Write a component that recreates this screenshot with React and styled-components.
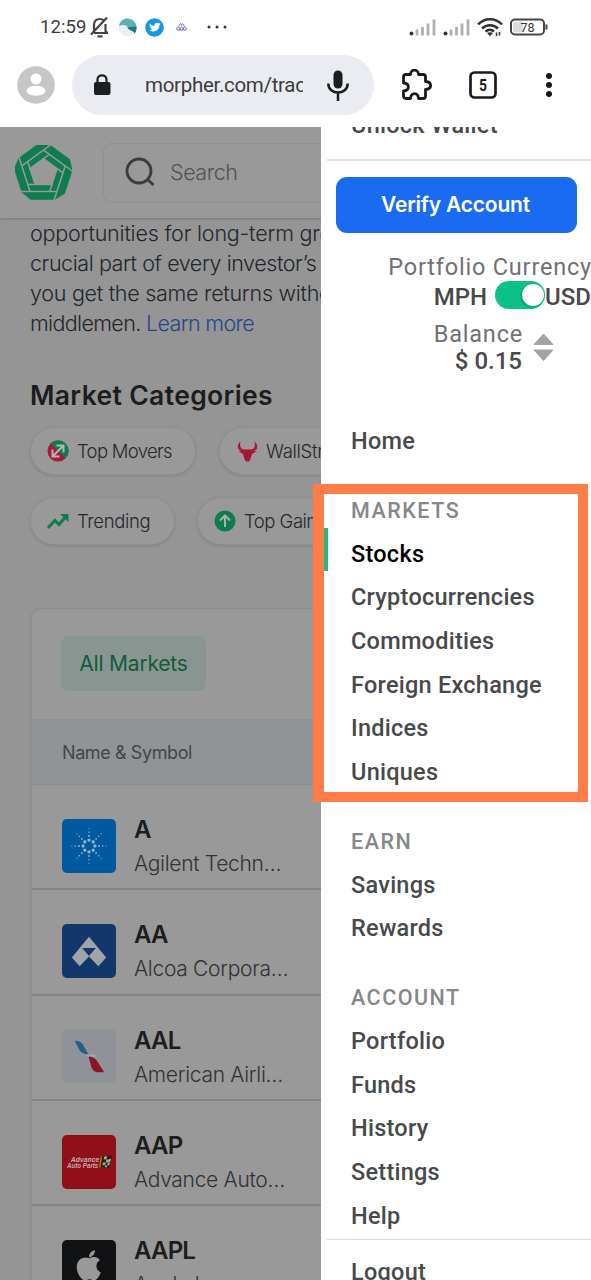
import React from 'react';
import styled, { css, createGlobalStyle } from 'styled-components';

const GlobalStyle = createGlobalStyle`
  * {
    box-sizing: border-box;
  }
  body {
    margin: 0;
    background: #fff;
  }
`;

const Screen = styled.div`
  width: 591px;
  height: 1280px;
  display: flex;
  flex-direction: column;
  overflow: hidden;
  background: #fff;
  font-family: Roboto, 'Liberation Sans', sans-serif;
`;

/* ---------- phone status bar ---------- */

const StatusBar = styled.div`
  height: 54px;
  flex: none;
  display: flex;
  align-items: center;
  padding: 0 43px 0 40px;
  color: #3c3c3e;
`;

const Clock = styled.span`
  width: 50px;
  font-size: 18.5px;
  letter-spacing: 0.1px;
  white-space: nowrap;
`;

const StatusIcons = styled.div`
  display: flex;
  align-items: center;
  gap: ${props => props.$gap}px;
  ${props => props.$left && css`
    margin-left: ${props.$left}px;
  `}
  ${props => props.$end && css`
    margin-left: auto;
  `}
`;

/* ---------- browser toolbar ---------- */

const Toolbar = styled.div`
  height: 73px;
  flex: none;
  display: flex;
  align-items: flex-start;
  padding-left: 17px;
`;

const ToolIcon = styled.div`
  height: 61px;
  display: flex;
  align-items: center;
  margin-left: ${props => props.$left || 0}px;
`;

const AddressBar = styled.div`
  width: 302px;
  height: 60px;
  margin-left: 17px;
  margin-top: 1px;
  padding: 0 24px 0 20px;
  border-radius: 30px;
  background: #ebecf1;
  display: flex;
  align-items: center;
`;

const Url = styled.div`
  width: 158px;
  margin-left: 33px;
  margin-right: 24px;
  overflow: hidden;
  white-space: nowrap;
  font-size: 20.5px;
  letter-spacing: -0.3px;
  line-height: 28px;
  color: #3b3c40;
`;

/* ---------- dimmed page ---------- */

const Viewport = styled.div`
  position: relative;
  flex: 1;
  min-height: 0;
  overflow: hidden;
  background: #959595;
  font-family: Inter, 'Liberation Sans', sans-serif;
`;

const Header = styled.div`
  height: 91px;
  display: flex;
  align-items: center;
  padding-left: 15px;
  background: #999;
  box-shadow: 0 1px 3px rgba(0, 0, 0, 0.2);
`;

const SearchBox = styled.div`
  width: 400px;
  height: 60px;
  margin-left: 31px;
  padding: 0 0 2px 21px;
  display: flex;
  align-items: center;
  gap: 14px;
  border: 1px solid #8f8f8f;
  border-radius: 9px;
  color: #505255;
  font-size: 21.5px;
  font-weight: 300;
  letter-spacing: -0.45px;
`;

const Intro = styled.div`
  padding-left: 30px;
  font-size: 21.5px;
  font-weight: 300;
  line-height: 30px;
  color: #22272c;
`;

const IntroLine = styled.div`
  white-space: nowrap;
  letter-spacing: ${props => props.$track || 0}px;
`;

const LearnMore = styled.a`
  color: #23478d;
`;

const Title = styled.h2`
  margin: 42px 0 0 30px;
  font-size: 26.5px;
  font-weight: 600;
  line-height: 31px;
  letter-spacing: 0.35px;
  color: #1b1d1f;
  white-space: nowrap;
`;

const ChipRow = styled.div`
  display: flex;
  gap: ${props => props.$gap}px;
  margin: ${props => props.$top}px 0 0 30px;
`;

const Chip = styled.div`
  flex: none;
  width: ${props => props.$width}px;
  height: 48px;
  padding-left: 16px;
  display: flex;
  align-items: center;
  gap: 8px;
  border: 1px solid #909090;
  border-radius: 24px;
  background: #999;
  box-shadow: 0 1px 3px rgba(0, 0, 0, 0.12);
  font-size: 18.5px;
  font-weight: 300;
  letter-spacing: ${props => props.$track || 0}px;
  color: #25282d;
  white-space: nowrap;
`;

const MarketCard = styled.div`
  width: 620px;
  margin: 63px 0 0 30px;
  border: 1px solid #8d8d8d;
  border-left: 2px solid #8e8e8e;
  border-radius: 10px 10px 0 0;
  background: #999;
`;

const Tabs = styled.div`
  height: 110px;
  padding: 0 0 2px 29px;
  display: flex;
  align-items: center;
`;

const Tab = styled.div`
  width: 145px;
  height: 55px;
  border-radius: 8px;
  background: #899591;
  display: flex;
  align-items: center;
  justify-content: center;
  color: #0f5d3a;
  font-size: 21px;
  letter-spacing: -0.2px;
`;

const TableHead = styled.div`
  height: 66px;
  padding: 1px 0 0 30px;
  display: flex;
  align-items: center;
  background: #919496;
  border-top: 1px solid #8d8f91;
  border-bottom: 1px solid #8a8c8d;
  color: #434649;
  font-size: 18px;
  letter-spacing: -0.4px;
`;

const StockRow = styled.div`
  height: 105.3px;
  padding: 20px 0 0 30px;
  display: flex;
  align-items: center;
  gap: 18px;
  border-bottom: 2px solid #858585;
  > svg {
    margin-bottom: 2px;
  }
`;

const StockText = styled.div`
  display: flex;
  flex-direction: column;
  white-space: nowrap;
`;

const Ticker = styled.div`
  font-size: 24px;
  font-weight: 600;
  line-height: 34px;
  letter-spacing: -0.8px;
  color: #1b1d1f;
`;

const Company = styled.div`
  font-size: 21px;
  font-weight: 300;
  line-height: 33px;
  letter-spacing: -0.3px;
  color: #303235;
`;

/* ---------- side menu ---------- */

const Drawer = styled.div`
  position: absolute;
  top: 0;
  right: 0;
  bottom: 0;
  width: 270px;
  overflow: hidden;
  background: #fff;
  font-family: Roboto, 'Liberation Sans', sans-serif;
  color: #48494b;
`;

const Wallet = styled.div`
  height: 61px;
  margin: -27px 0 0 6px;
  padding-left: 24px;
  border-bottom: 2px solid #e3e3e5;
  font-size: 23.5px;
  font-weight: 500;
  line-height: 50px;
  letter-spacing: 0.25px;
`;

const VerifyButton = styled.button`
  display: block;
  width: 241px;
  height: 56px;
  margin: 16px 0 0 15px;
  padding: 0 2px 1px 0;
  border: 0;
  border-radius: 11px;
  background: #1b6bf0;
  color: #fff;
  font-family: Inter, sans-serif;
  font-size: 21px;
  font-weight: 600;
  letter-spacing: -0.2px;
`;

const Label = styled.div`
  font-size: 23.5px;
  line-height: 28px;
  letter-spacing: 0.8px;
  margin-right: -1px;
  color: #707173;
  white-space: nowrap;
`;

const Value = styled.span`
  font-size: 24px;
  font-weight: 500;
  line-height: 28px;
  white-space: nowrap;
`;

const Currency = styled.div`
  margin-top: 20px;
  display: flex;
  flex-direction: column;
  align-items: flex-end;
`;

const SwitchRow = styled.div`
  height: 32px;
  display: flex;
  align-items: center;
`;

const Switch = styled.div`
  width: 50px;
  height: 28px;
  margin: -4px 0 0 8px;
  padding: 3px 1px;
  display: flex;
  justify-content: flex-end;
  border-radius: 14px;
  background: #0bc188;
`;

const Knob = styled.div`
  width: 22px;
  height: 22px;
  border-radius: 50%;
  background: #fff;
  box-shadow: -1px 1px 2px rgba(0, 0, 0, 0.25);
`;

const Balance = styled.div`
  margin-top: 7px;
  padding-right: 37px;
  height: 54px;
  display: flex;
  align-items: center;
  justify-content: flex-end;
  gap: 11px;
`;

const BalanceText = styled.div`
  display: flex;
  flex-direction: column;
  align-items: flex-end;
  ${Label} {
    line-height: 26px;
    padding-top: 1px;
  }
`;

const Menu = styled.nav`
  margin-top: 45px;
`;

const MenuItem = styled.a`
  display: flex;
  align-items: center;
  height: 43.7px;
  padding-left: 30px;
  font-size: 23.5px;
  font-weight: 500;
  letter-spacing: 0.25px;
  white-space: nowrap;
  ${props => props.$active && css`
    margin: -4px 0 4px;
    padding: 8px 0 0 23px;
    color: #000;
    border-left: 7px solid #22ba7c;
  `}
`;

const Section = styled.div`
  margin-top: 27px;
`;

const SectionTitle = styled.div`
  height: 42px;
  padding-left: 30px;
  font-size: 21.5px;
  font-weight: 500;
  line-height: 42px;
  letter-spacing: 1.5px;
  color: #868788;
`;

const Logout = styled.div`
  margin-left: 6px;
  margin-top: 1px;
  padding: 8px 0 0 24px;
  border-top: 1px solid #d9d9da;
  font-size: 23.5px;
  font-weight: 500;
  line-height: 48px;
  letter-spacing: 0.25px;
`;

const Highlight = styled.div`
  position: absolute;
  left: 313px;
  top: 357px;
  width: 275px;
  height: 318px;
  border: 10px solid #ff7c49;
  border-left-width: 11px;
`;

/* ---------- icons ---------- */

const BellOff = () => (
  <svg width="20" height="22" viewBox="0 0 20 22" fill="none" stroke="#444" strokeWidth="2.200">
    <path d="M4 15V9c0-4 2.500-6 6-6 1.500 0 3 .5 4 1.500M15.500 8v7l2 2.200M4 17h14M1 18.500 17 1.500M7.500 20.300h5" />
  </svg>
);

const Bird = () => (
  <svg width="19" height="19" viewBox="0 0 19 19">
    <circle cx="9.500" cy="9.500" r="9" fill="#e5f3f3" />
    <path d="M1 8C2 2.500 6 .5 9.500.5c5 0 9 4 9 9 0 3-1 4.500-2 6-1-3-3.500-4-6-5.500C8 6 4 7 1 8z" fill="#5faeb2" />
    <path d="m9 9.500 9.500-1c0 3 0 5-2 7-1-3-4-2-7.500-6z" fill="#23748d" />
  </svg>
);

const Twitter = () => (
  <svg width="19" height="19" viewBox="0 0 19 19">
    <circle cx="9.500" cy="9.500" r="9.300" fill="#1598dc" />
    <path d="M4.500 5.500c1.300 1.500 3 2.300 5 2.400-.3-2.900 2.800-3.900 4.400-2.300l1.500-.5-.9 1.400 1-.2-1.200 1.300c0 4.800-5.300 7.500-9.800 4.900 1.300 0 2.100-.3 2.900-.9-1-.2-1.600-.8-1.800-1.500h.8c-1.200-.4-1.700-1.200-1.700-2.300l.8.2c-1-.8-1.300-1.700-1-2.500z" fill="#fff" />
  </svg>
);

const Mask = () => (
  <svg width="11" height="8" viewBox="0 0 11 8" fill="none" stroke="#7467b4" strokeWidth="1">
    <path d="M3 3.500C3 0 5.500 0 5.500 2.500 5.500 0 8 0 8 3.500M1 7c-1-4 3-4 2.500 0zM4.300 7c-1-4 3.400-4 2.400 0zM7.500 7c-1-4 3.500-4 2.500 0z" />
  </svg>
);

const Dots = () => (
  <svg width="20" height="4" viewBox="0 0 20 4" fill="#333">
    <circle cx="2" cy="2" r="1.500" />
    <circle cx="10" cy="2" r="1.500" />
    <circle cx="18" cy="2" r="1.500" />
  </svg>
);

const Signal = () => (
  <svg width="27" height="17" viewBox="0 0 27 17">
    <circle cx="2.500" cy="14.500" r="2" fill="#333" />
    <path d="M8 16.500v-6M13.500 16.500V8M19 16.500V4.500M25 16.500v-16" stroke="#b0b0b2" strokeWidth="2.800" />
  </svg>
);

const Wifi = () => (
  <svg width="26" height="20" viewBox="0 0 26 20" fill="none" stroke="#333" strokeWidth="2.500">
    <path d="M1 7.500C7.500.5 18.500.5 25 7.500M5 11.500c4.500-4.500 11.500-4.500 16 0M8.500 14.500c2.500-2.200 6-2.200 8.500 0" />
    <path d="m10 16 3 3.200 3-3.200c-1.500-1-4.500-1-6 0z" fill="#333" stroke="none" />
    <path d="M19.500 19v-3.500M22.500 15v3.500" strokeWidth="1.600" />
  </svg>
);

const Battery = () => (
  <svg width="38" height="18" viewBox="0 0 38 18">
    <rect x="1" y="1.500" width="33" height="15" rx="4" fill="#fff" stroke="#444" strokeWidth="2" />
    <rect x="3" y="3.500" width="10" height="11" rx="2" fill="#ddd" />
    <path d="M36.500 6.500v5" stroke="#444" strokeWidth="2" />
    <text x="17.500" y="13.500" textAnchor="middle" fontSize="12.500" fill="#333" fontFamily="Roboto">78</text>
  </svg>
);

const Avatar = () => (
  <svg width="38" height="38" viewBox="0 0 38 38">
    <circle cx="19" cy="19" r="18.800" fill="#c6c6c7" />
    <circle cx="19" cy="13" r="5.500" fill="#fff" />
    <ellipse cx="19" cy="24.800" rx="9.500" ry="5" fill="#fff" />
  </svg>
);

const Lock = () => (
  <svg width="20" height="22" viewBox="0 0 20 22">
    <path d="M5.500 9V5.500c0-5.500 9-5.500 9 0V9" fill="none" stroke="#1d1e20" strokeWidth="2.200" />
    <rect x="2" y="8" width="16.500" height="13" rx="2" fill="#1d1e20" />
  </svg>
);

const Mic = () => (
  <svg width="22" height="31" viewBox="0 0 22 31">
    <rect x="6.500" y="0.500" width="9" height="18" rx="4.500" fill="#1d1e20" />
    <path d="M1.300 13.500c0 12 19.400 12 19.400 0M11 22.500V31" fill="none" stroke="#1d1e20" strokeWidth="2.500" />
  </svg>
);

const Puzzle = () => (
  <svg width="32" height="32" viewBox="0 0 32 32" fill="none" stroke="#1a1a1c" strokeWidth="2.800" strokeLinejoin="round">
    <path d="M2.500 8q0-2.500 2.500-2.500h4.500C9.500-.3 17.500-.3 17.500 5.500H22q2.500 0 2.500 2.500v4.500c6.800.5 6.800 7.500 0 8V27q0 2.500-2.500 2.500h-4.500c-.5-6.500-7.500-6.500-8 0H5Q2.500 29.500 2.500 27v-5c6.500-.5 6.500-7.500 0-8z" />
  </svg>
);

const TabCount = () => (
  <svg width="28" height="28" viewBox="0 0 28 28">
    <rect x="1.500" y="1.500" width="25" height="25" rx="4" fill="none" stroke="#1a1a1c" strokeWidth="2.700" />
    <text x="10" y="20" textLength="8" lengthAdjust="spacingAndGlyphs" fontSize="17" fontWeight="700" fill="#1a1a1c" fontFamily="Roboto">5</text>
  </svg>
);

const Kebab = () => (
  <svg width="8" height="26" viewBox="0 0 8 26" fill="#1a1a1c">
    <circle cx="4" cy="4" r="3" />
    <circle cx="4" cy="13" r="3" />
    <circle cx="4" cy="22" r="3" />
  </svg>
);

const turns = [0, 72, 144, 216, 288];

const Logo = () => (
  <svg width="57" height="56" viewBox="-28.500 -28 57 56">
    {turns.map(a => (
      <polygon key={a} transform={`rotate(${a})`} points="0,0 11.500,26.500 -13,26.500 -21.800,19" fill="#0d7d51" stroke="#0d7d51" strokeWidth=".5" />
    ))}
    <polygon points="0,-15.200 14.500,-4.700 8.900,12.300 -8.900,12.300 -14.500,-4.700" fill="#999" />
    {turns.map(a => (
      <path key={a} transform={`rotate(${a})`} d="M13 18.500H-23M-8 11.600h-7.500" stroke="#999" strokeWidth="1.500" />
    ))}
  </svg>
);

const SearchIcon = () => (
  <svg width="31" height="30" viewBox="0 0 31 30" fill="none" stroke="#3b3c3e" strokeWidth="2.800">
    <circle cx="14" cy="14" r="12" />
    <path d="m22 22 6.500 6" />
  </svg>
);

const Movers = () => (
  <svg width="22" height="22" viewBox="0 0 22 22">
    <circle cx="11" cy="11" r="10.500" fill="#a8183a" />
    <path d="M3.500 3.500a10.500 10.500 0 0 1 15 15z" fill="#0d7d51" />
    <path d="M6 16 16 6M9.500 5.500h7v7M5.500 9.500v7h7" fill="none" stroke="#b5b5b5" strokeWidth="2" />
  </svg>
);

const Bull = () => (
  <svg width="22" height="21" viewBox="-1.500 0 22 21">
    <path d="M3 .5C-.8 4-.8 8.500 4 10l-3 .3L5.500 13 7 18l1.500 2.500h3L13 18l1.500-5 4.500-2.700-3-.3c4.800-1.500 4.800-6 1-9.500 1.300 5-.2 8-4 8H7C3.200 8.500 1.700 5.500 3 .5z" fill="#a8162c" />
  </svg>
);

const Trend = () => (
  <svg width="22" height="17" viewBox="0 0 22 17" fill="none" stroke="#0d7d51" strokeWidth="3">
    <path d="m1 15 7-7.500 4 4 7-8" />
    <path d="M13 1h8.500v8z" fill="#0d7d51" stroke="none" />
  </svg>
);

const Gainer = () => (
  <svg width="22" height="22" viewBox="0 0 22 22">
    <circle cx="11" cy="11" r="10.500" fill="#0d7d51" />
    <path d="M11 17V6M6 10.500l5-5 5 5" fill="none" stroke="#a9b3ae" strokeWidth="2" />
  </svg>
);

const Agilent = () => (
  <svg width="54" height="54" viewBox="-27.500 -27.500 55 55">
    <rect x="-27.500" y="-27.500" width="55" height="55" rx="5" fill="#005a9f" />
    {[0, 45, 90, 135, 180, 225, 270, 315].map(a => (
      <g key={a} transform={`rotate(${a})`} fill="#8fb0c8">
        <circle cx="6" cy="0" r="1.700" />
        <circle cx="10.200" cy="0" r="1" />
        <circle cx="14" cy="0" r="0.800" />
        <circle cx="17.500" cy="0" r="0.600" />
      </g>
    ))}
  </svg>
);

const Alcoa = () => (
  <svg width="54" height="54" viewBox="0 0 55 55">
    <rect width="55" height="55" rx="5" fill="#13376a" />
    <path d="M27.500 13 45 34l-8 9-9.500-10-9.500 10-8-9z" fill="#a0a4aa" />
    <path d="M20.500 24.500h14l-7 8z" fill="#13376a" />
  </svg>
);

const American = () => (
  <svg width="54" height="54" viewBox="0 0 55 55">
    <rect width="55" height="55" rx="5" fill="#8f9298" />
    <path d="M13 12q7 0 9 5l5 9q-8-1-10-6z" fill="#245f89" />
    <path d="M24 26h9l2 2-8 1z" fill="#a5a7aa" />
    <path d="M27 28q6 0 9 5l7 11h-7q-4 0-6-5z" fill="#8c1523" />
  </svg>
);

const Advance = () => (
  <svg width="54" height="54" viewBox="0 0 55 55">
    <rect width="55" height="55" rx="5" fill="#910f18" />
    <g fill="#c4adaf" fontFamily="Liberation Sans" fontWeight="700" fontStyle="italic">
      <text x="9" y="27.500" textLength="29" lengthAdjust="spacingAndGlyphs" fontSize="8">Advance</text>
      <text x="5" y="34" textLength="32" lengthAdjust="spacingAndGlyphs" fontSize="7">Auto Parts</text>
    </g>
    <path d="m41 22 10-1-3 13-9-2z" fill="#26211d" />
    <path d="m40 22-1.500 11" stroke="#a8752a" strokeWidth="1.500" />
    <path d="m43 22 3-.3-.6 3-3 .3zM48 24.500l2-.2-.7 3-2 .2zM45.200 25l2.800-.3-.7 3-2.800.3zM41.700 28l3-.2-.7 3-2.800.1zM46.700 28l2.200-.2-.7 3-2.200.1zM44 31l2.200-.1-.5 2.200-2.200-.4z" fill="#aaa58c" />
  </svg>
);

const Apple = () => (
  <svg width="54" height="54" viewBox="0 0 55 55">
    <rect width="55" height="55" rx="5" fill="#111214" />
    <path d="M28 18.500c3-1.500 8-2 10.500 2-5 3-4.500 10 1 12.500-2 5-5 9-8 8-3-1.200-4-1.200-7 0-4 1.500-9.500-7-9.500-13 0-8 6-12 13-9.500zM27.500 17.500c0-4 3-6.500 6-7 .3 4-3 7-6 7z" fill="#999" />
  </svg>
);

const Sorter = () => (
  <svg width="21" height="29" viewBox="0 0 21 29" fill="#a3a3a4" stroke="#a3a3a4" strokeLinejoin="round">
    <path d="M10.500 1 20 11.500H1zM1 17h19l-9.500 10.500z" />
  </svg>
);

const stocks = [
  { ticker: 'A', name: 'Agilent Techn…', Icon: Agilent },
  { ticker: 'AA', name: 'Alcoa Corpora…', Icon: Alcoa },
  { ticker: 'AAL', name: 'American Airli…', Icon: American },
  { ticker: 'AAP', name: 'Advance Auto…', Icon: Advance },
  { ticker: 'AAPL', name: 'Apple Inc.', Icon: Apple },
];

const sections = [
  { title: 'MARKETS', items: ['Stocks', 'Cryptocurrencies', 'Commodities', 'Foreign Exchange', 'Indices', 'Uniques'] },
  { title: 'EARN', items: ['Savings', 'Rewards'] },
  { title: 'ACCOUNT', items: ['Portfolio', 'Funds', 'History', 'Settings', 'Help'] },
];

const SideMenu = () => (
  <Drawer>
    <Wallet>Unlock Wallet</Wallet>
    <VerifyButton>Verify Account</VerifyButton>
    <Currency>
      <Label>Portfolio Currency</Label>
      <SwitchRow>
        <Value>MPH</Value>
        <Switch><Knob /></Switch>
        <Value>USD</Value>
      </SwitchRow>
    </Currency>
    <Balance>
      <BalanceText>
        <Label>Balance</Label>
        <Value>$ 0.15</Value>
      </BalanceText>
      <Sorter />
    </Balance>
    <Menu>
      <MenuItem>Home</MenuItem>
      {sections.map(section => (
        <Section key={section.title}>
          <SectionTitle>{section.title}</SectionTitle>
          {section.items.map(item => (
            <MenuItem key={item} $active={item === 'Stocks'}>{item}</MenuItem>
          ))}
        </Section>
      ))}
    </Menu>
    <Logout>Logout</Logout>
  </Drawer>
);

const App = () => (
  <Screen>
    <GlobalStyle />
    <StatusBar>
      <Clock>12:59</Clock>
      <StatusIcons $gap={8}>
        <BellOff />
        <Bird />
        <Twitter />
      </StatusIcons>
      <StatusIcons $gap={20} $left={12}>
        <Mask />
        <Dots />
      </StatusIcons>
      <StatusIcons $gap={7} $end>
        <Signal />
        <Signal />
        <Wifi />
        <Battery />
      </StatusIcons>
    </StatusBar>
    <Toolbar>
      <ToolIcon><Avatar /></ToolIcon>
      <AddressBar>
        <Lock />
        <Url>morpher.com/trade</Url>
        <Mic />
      </AddressBar>
      <ToolIcon $left={27}><Puzzle /></ToolIcon>
      <ToolIcon $left={36}><TabCount /></ToolIcon>
      <ToolIcon $left={48}><Kebab /></ToolIcon>
    </Toolbar>
    <Viewport>
      <Header>
        <Logo />
        <SearchBox>
          <SearchIcon />
          Search
        </SearchBox>
      </Header>
      <Intro>
        <IntroLine $track={-0.2}>opportunities for long-term growth</IntroLine>
        <IntroLine $track={-0.43}>crucial part of every investor’s</IntroLine>
        <IntroLine $track={-0.27}>you get the same returns without</IntroLine>
        <IntroLine $track={-0.65}>middlemen. <LearnMore>Learn more</LearnMore></IntroLine>
      </Intro>
      <Title>Market Categories</Title>
      <ChipRow $gap={23} $top={16}>
        <Chip $width={166} $track={-0.7}><Movers />Top Movers</Chip>
        <Chip $width={210} $track={-0.3}><Bull />WallStreetBets</Chip>
      </ChipRow>
      <ChipRow $gap={22} $top={22}>
        <Chip $width={145} $track={-0.35}><Trend />Trending</Chip>
        <Chip $width={170} $track={-0.5}><Gainer />Top Gainers</Chip>
      </ChipRow>
      <MarketCard>
        <Tabs><Tab>All Markets</Tab></Tabs>
        <TableHead>Name &amp; Symbol</TableHead>
        {stocks.map(({ ticker, name, Icon }) => (
          <StockRow key={ticker}>
            <Icon />
            <StockText>
              <Ticker>{ticker}</Ticker>
              <Company>{name}</Company>
            </StockText>
          </StockRow>
        ))}
      </MarketCard>
      <SideMenu />
      <Highlight />
    </Viewport>
  </Screen>
);

export default App;
